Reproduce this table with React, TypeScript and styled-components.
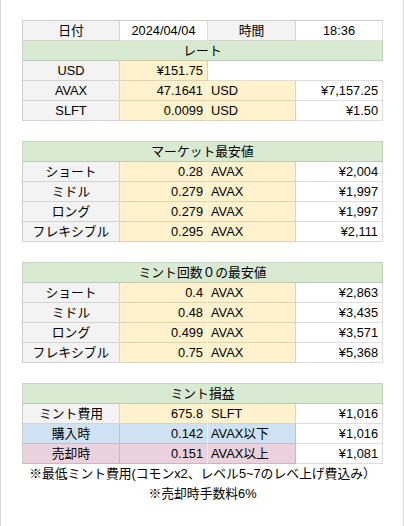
import React from "react";
import styled, { createGlobalStyle, css } from "styled-components";

const GlobalStyle = createGlobalStyle`
  html, body {
    margin: 0;
    padding: 0;
    background: #ffffff;
  }
  body {
    font-family: "Liberation Sans", Arial, "Noto Sans CJK JP", sans-serif;
    color: #000000;
  }
`;

type Tone = "label" | "white" | "yellow" | "green" | "blue" | "pink" | "blank";

const toneColors: Record<Tone, string> = {
  label: "#f3f3f3",
  white: "#ffffff",
  yellow: "#fff2cc",
  green: "#d9ead3",
  blue: "#cfe2f3",
  pink: "#ead1dc",
  blank: "#ffffff",
};

const Frame = styled.div`
  width: 404px;
  height: 526px;
  box-sizing: border-box;
  border-left: 1px solid #d9d9d9;
  border-right: 1px solid #d9d9d9;
  padding: 20px 21px 0 21px;
`;

const Block = styled.div`
  display: grid;
  grid-template-columns: 97px 88px 88px 87px;
  grid-auto-rows: 20px;
  border-top: 1px solid #cfcfcf;
  border-left: 1px solid #cfcfcf;
  width: 361px;
  box-sizing: border-box;
  margin-bottom: 20px;
`;

const Cell = styled.div<{
  $tone: Tone;
  $align?: "left" | "right" | "center";
  $span?: number;
  $soft?: boolean;
}>`
  box-sizing: border-box;
  height: 20px;
  line-height: 19px;
  font-size: 12.8px;
  white-space: nowrap;
  overflow: hidden;
  background: ${(p) => toneColors[p.$tone]};
  border-right: 1px solid rgba(0, 0, 0, 0.13);
  border-bottom: 1px solid rgba(0, 0, 0, 0.13);
  text-align: ${(p) => p.$align || "center"};
  padding: ${(p) => (p.$align === "right" ? "0 4px 0 0" : p.$align === "left" ? "0 0 0 3px" : "0")};
  grid-column: span ${(p) => p.$span || 1};
  ${(p) =>
    p.$soft &&
    css`
      border-right-color: rgba(255, 255, 255, 0.55);
    `}
  ${(p) =>
    p.$tone === "green" &&
    css`
      border-right-color: rgba(60, 90, 50, 0.2);
      border-bottom-color: rgba(60, 90, 50, 0.2);
    `}
  ${(p) =>
    p.$tone === "blank" &&
    css`
      border-right-color: transparent;
    `}
`;

const Notes = styled.div`
  width: 361px;
  margin-top: -20px;
  font-size: 12.8px;
`;

const NoteLine = styled.div`
  height: 20px;
  line-height: 20px;
  text-align: center;
  white-space: nowrap;
`;

type Row = { label: string; amount: string; unit: string; yen: string; tone?: Tone };

function Section(props: { title: string; rows: Row[] }) {
  return (
    <Block>
      <Cell $tone="green" $span={4}>
        {props.title}
      </Cell>
      {props.rows.map((r) => {
        const tone = r.tone || "yellow";
        return (
          <React.Fragment key={r.label}>
            <Cell $tone={r.tone || "label"}>{r.label}</Cell>
            <Cell $tone={tone} $align="right" $soft>
              {r.amount}
            </Cell>
            <Cell $tone={tone} $align="left">
              {r.unit}
            </Cell>
            <Cell $tone="white" $align="right">
              {r.yen}
            </Cell>
          </React.Fragment>
        );
      })}
    </Block>
  );
}

const market: Row[] = [
  { label: "ショート", amount: "0.28", unit: "AVAX", yen: "¥2,004" },
  { label: "ミドル", amount: "0.279", unit: "AVAX", yen: "¥1,997" },
  { label: "ロング", amount: "0.279", unit: "AVAX", yen: "¥1,997" },
  { label: "フレキシブル", amount: "0.295", unit: "AVAX", yen: "¥2,111" },
];

const mintZero: Row[] = [
  { label: "ショート", amount: "0.4", unit: "AVAX", yen: "¥2,863" },
  { label: "ミドル", amount: "0.48", unit: "AVAX", yen: "¥3,435" },
  { label: "ロング", amount: "0.499", unit: "AVAX", yen: "¥3,571" },
  { label: "フレキシブル", amount: "0.75", unit: "AVAX", yen: "¥5,368" },
];

const profit: Row[] = [
  { label: "ミント費用", amount: "675.8", unit: "SLFT", yen: "¥1,016" },
  { label: "購入時", amount: "0.142", unit: "AVAX以下", yen: "¥1,016", tone: "blue" },
  { label: "売却時", amount: "0.151", unit: "AVAX以上", yen: "¥1,081", tone: "pink" },
];

export default function App() {
  return (
    <>
      <GlobalStyle />
      <Frame>
        <Block>
          <Cell $tone="label">日付</Cell>
          <Cell $tone="white">2024/04/04</Cell>
          <Cell $tone="label">時間</Cell>
          <Cell $tone="white">18:36</Cell>
          <Cell $tone="green" $span={4}>
            レート
          </Cell>
          <Cell $tone="label">USD</Cell>
          <Cell $tone="yellow" $align="right">
            ¥151.75
          </Cell>
          <Cell $tone="blank" $span={2} />
          <Cell $tone="label">AVAX</Cell>
          <Cell $tone="yellow" $align="right" $soft>
            47.1641
          </Cell>
          <Cell $tone="yellow" $align="left">
            USD
          </Cell>
          <Cell $tone="white" $align="right">
            ¥7,157.25
          </Cell>
          <Cell $tone="label">SLFT</Cell>
          <Cell $tone="yellow" $align="right" $soft>
            0.0099
          </Cell>
          <Cell $tone="yellow" $align="left">
            USD
          </Cell>
          <Cell $tone="white" $align="right">
            ¥1.50
          </Cell>
        </Block>
        <Section title="マーケット最安値" rows={market} />
        <Section title="ミント回数０の最安値" rows={mintZero} />
        <Section title="ミント損益" rows={profit} />
        <Notes>
          <NoteLine>※最低ミント費用(コモンx2、レベル5~7のレベ上げ費込み）</NoteLine>
          <NoteLine>※売却時手数料6%</NoteLine>
        </Notes>
      </Frame>
    </>
  );
}
